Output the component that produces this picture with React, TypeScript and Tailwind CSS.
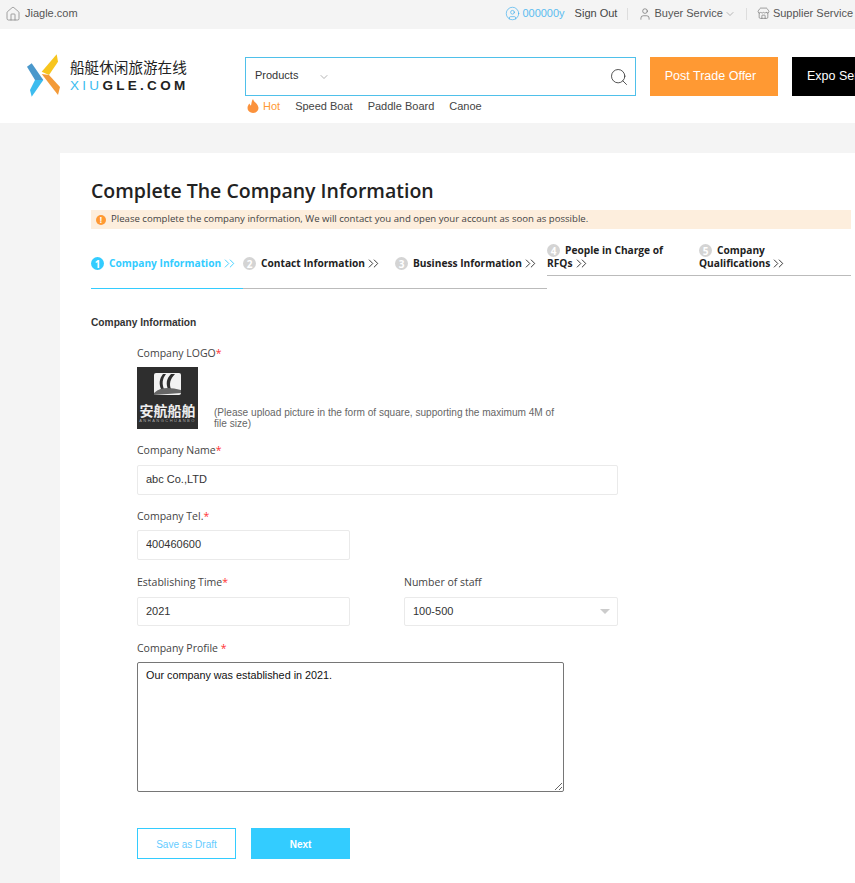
import React from 'react';
import { ChevronDown, ChevronsRight, CircleUser, House, Search, Store, User } from 'lucide-react';

const arial = 'font-["Liberation_Sans",Arial,sans-serif]';
const segoe = 'font-["Open_Sans","Noto_Sans",sans-serif]';

const steps = [
  { n: 1, title: 'Company Information', active: true },
  { n: 2, title: 'Contact Information' },
  { n: 3, title: 'Business Information' },
];

const Label = ({ text, space }: { text: string; space?: boolean }) => (
  <div className={`${segoe} text-[10.5px] leading-[15px] text-[#444]`}>
    {text}
    {space ? ' ' : ''}
    <span className="text-[#f33]">*</span>
  </div>
);

const Num = ({ n, active }: { n: number; active?: boolean }) => (
  <span
    className={`mr-[5px] flex h-[13px] w-[13px] shrink-0 items-center justify-center rounded-full text-[10px] leading-none font-bold text-white ${
      active ? 'bg-[#33ccff]' : 'bg-[#d4d4d4]'
    }`}
  >
    {n}
  </span>
);

const TextField = ({ value, className = '' }: { value: string; className?: string }) => (
  <input
    readOnly
    defaultValue={value}
    className={`${arial} block rounded-[2px] border border-[#eaeaea] bg-white px-2 pb-[2px] text-[11px] text-[#333] outline-none ${className}`}
  />
);

export default function App() {
  return (
    <div className={`${arial} h-[883px] w-[855px] overflow-hidden bg-[#f4f4f4]`}>
      {/* top bar */}
      <div className="flex h-[29px] items-center justify-between pr-[2px] pb-[2px] pl-[5px] text-[11px] text-[#555]">
        <div className="flex items-center gap-[4px]">
          <House size={16} strokeWidth={1} className="text-[#777]" />
          <span>Jiagle.com</span>
        </div>
        <div className="flex items-center">
          <CircleUser size={15} strokeWidth={1} className="text-[#33aaee]" />
          <span className="ml-[2px] text-[#5bbcf0]">000000y</span>
          <span className="ml-[10px] text-[#444]">Sign Out</span>
          <span className="mx-[10px] h-[12px] w-px bg-[#ddd]" />
          <User size={14} strokeWidth={1} className="text-[#555]" />
          <span className="ml-[2px]">Buyer Service</span>
          <ChevronDown size={12} strokeWidth={1} className="ml-[1px] text-[#777]" />
          <span className="mx-[10px] h-[12px] w-px bg-[#ddd]" />
          <Store size={13} strokeWidth={1} className="text-[#555]" />
          <span className="ml-[3px]">Supplier Service</span>
        </div>
      </div>

      {/* header */}
      <div className="flex h-[94px] bg-white pt-[28px] pl-[27px]">
        <div className="-mt-[3px] flex w-[218px] shrink-0 items-start">
          <svg width="36" height="44" viewBox="0 0 36 44" className="shrink-0">
            <path d="M0 12.7 L4.7 9.3 L16.3 26 L8 26 Z" fill="#4a98cc" />
            <path d="M16.3 26 L8 26 L3 36 L4.7 42.7 Z" fill="#3cbcef" />
            <path d="M29.7 .3 L31 7.7 L22 21 L14.7 17.7 Z" fill="#f7c51e" />
            <path d="M14.7 20 L22 21 L33 33 L31 41 Z" fill="#f39a38" />
          </svg>
          <div className="ml-[7px] flex flex-col pt-[4px]">
            <span className='font-["Noto_Sans_CJK_SC",sans-serif] text-[14.6px] leading-[18px] whitespace-nowrap text-[#222]'>
              船艇休闲旅游在线
            </span>
            <span className="mt-[2px] text-[13.5px] leading-[16px] font-semibold tracking-[3.3px] whitespace-nowrap text-[#222]">
              <span className="font-normal text-[#3cbcef]">XIU</span>GLE.COM
            </span>
          </div>
        </div>
        <div className="w-[391px] shrink-0">
          <div className="flex h-[39px] items-center justify-between border border-[#4fc0ea] pr-[6px] pl-[9px]">
            <div className="flex items-center text-[11px] text-[#333]">
              <span className="pb-[2px]">Products</span>
              <ChevronDown size={12} strokeWidth={1.5} className="ml-[20px] text-[#999]" />
            </div>
            <Search size={20} strokeWidth={1} className="text-[#333]" />
          </div>
          <div className="mt-[3px] flex items-center text-[11px] leading-[14px] text-[#444]">
            <svg width="12" height="14" viewBox="0 0 12 14" className="ml-[2px]">
              <path d="M6 0 C6.5 3 11.5 5 11.5 9 A5.5 5 0 0 1 .5 9 C.5 7 1.5 5.5 2.5 4.5 C3 6 3.5 6.5 4 6.5 C4.5 4.5 4.5 2 6 0 Z" fill="#fb923c" />
            </svg>
            <span className="ml-[4px] text-[#ff9933]">Hot</span>
            <span className="ml-[15px]">Speed Boat</span>
            <span className="ml-[15px]">Paddle Board</span>
            <span className="ml-[15px]">Canoe</span>
          </div>
        </div>
        <div className="ml-[14px] flex h-[39px] w-[128px] shrink-0 items-center justify-center bg-[#ff9933] pr-[7px] text-[12.5px] text-white">
          Post Trade Offer
        </div>
        <div className="ml-[14px] flex h-[39px] w-[120px] shrink-0 items-center bg-black pl-[15px] text-[12.5px] whitespace-nowrap text-white">
          Expo Service
        </div>
      </div>

      {/* card */}
      <div className="mt-[30px] ml-[60px] h-[730px] bg-white pt-[24px] pl-[31px]">
        <h1 className={`${segoe} text-[19.5px] leading-[27px] font-semibold text-[#222]`}>
          Complete The Company Information
        </h1>
        <div className={`${segoe} mt-[6px] flex h-[19px] w-[760px] items-center bg-[#fdeedd] pl-[5px] text-[9.6px] text-[#444]`}>
          <span className="mr-[5px] flex h-[10px] w-[10px] items-center justify-center rounded-full bg-[#ff9933] text-[8px] leading-none font-bold text-white">
            !
          </span>
          Please complete the company information, We will contact you and open your account as soon as possible.
        </div>

        {/* steps */}
        <div className={`${segoe} mt-[15px] flex items-start text-[10.2px] leading-[13px] font-bold text-[#222]`}>
          {steps.map((s) => (
            <div
              key={s.n}
              className={`mt-[13px] w-[152px] whitespace-nowrap border-b pb-[18px] ${
                s.active ? 'border-[#33ccff] text-[#33ccff]' : 'border-[#bbb]'
              }`}
            >
              <div className="flex h-[13px] items-center">
                <Num n={s.n} active={s.active} />
                {s.title}
                <ChevronsRight size={17} strokeWidth={1.25} className="shrink-0" />
              </div>
            </div>
          ))}
          <div className="w-[152px] border-b border-[#bbb] pb-[5px]">
            <div className="flex h-[13px] items-center">
              <Num n={4} />
              People in Charge of
            </div>
            <div className="flex h-[13px] items-center">
              RFQs
              <ChevronsRight size={17} strokeWidth={1.25} className="shrink-0" />
            </div>
          </div>
          <div className="w-[152px] border-b border-[#bbb] pb-[5px]">
            <div className="flex h-[13px] items-center">
              <Num n={5} />
              Company
            </div>
            <div className="flex h-[13px] items-center">
              Qualifications
              <ChevronsRight size={17} strokeWidth={1.25} className="shrink-0" />
            </div>
          </div>
        </div>

        <div className="mt-[27px] text-[10.2px] leading-[13px] font-bold text-[#333]">Company Information</div>

        {/* form */}
        <div className="mt-[17px] ml-[46px]">
          <Label text="Company LOGO" />
          <div className="mt-[6px] flex items-end">
            <div className="flex h-[62px] w-[61px] shrink-0 flex-col items-center bg-[#2e2e2e] pt-[6px]">
              <svg width="27" height="22" viewBox="0 0 27 22" className="block shrink-0">
                <rect x="0" y="0" width="27" height="22" rx="2" fill="#f2f2f2" />
                <path d="M9 1 C5 6 5 11 7 16 L10 16 C8 11 8 6 12 1 Z M17 1 C12 6 12 11 14 16 L17 16 C15 11 16 6 21 1 Z" fill="#2e2e2e" />
                <path d="M0 20 C8 13 17 15 27 17 L27 20 L0 22 Z" fill="#666" />
              </svg>
              <span className='font-["Noto_Sans_CJK_SC",sans-serif] mt-[9px] text-[14px] leading-[13px] font-bold whitespace-nowrap text-[#eee]'>
                安航船舶
              </span>
              <span className="mt-[2px] text-[4px] leading-[4px] tracking-[1.5px] whitespace-nowrap text-[#aaa]">ANHANGCHUANBO</span>
            </div>
            <p className="ml-[16px] w-[345px] text-[10.1px] leading-[11px] text-[#666]">
              (Please upload picture in the form of square, supporting the maximum 4M of file size)
            </p>
          </div>

          <div className="mt-[14px]">
            <Label text="Company Name" />
          </div>
          <TextField value="abc Co.,LTD" className="mt-[7px] h-[30px] w-[481px]" />

          <div className="mt-[14px]">
            <Label text="Company Tel." />
          </div>
          <TextField value="400460600" className="mt-[6px] h-[30px] w-[213px]" />

          <div className="mt-[15px] flex gap-[54px]">
            <div className="w-[213px]">
              <Label text="Establishing Time" />
              <TextField value="2021" className="mt-[7px] h-[29px] w-[213px]" />
            </div>
            <div className="w-[214px]">
              <div className={`${segoe} text-[10.5px] leading-[15px] text-[#444]`}>Number of staff</div>
              <div className="relative mt-[7px]">
                <TextField value="100-500" className="h-[29px] w-[214px]" />
                <span className="absolute top-[12px] right-[8px] h-0 w-0 border-x-[5px] border-t-[5px] border-x-transparent border-t-[#ccc]" />
              </div>
            </div>
          </div>

          <div className="mt-[15px]">
            <Label text="Company Profile" space />
          </div>
          <textarea
            readOnly
            defaultValue="Our company was established in 2021."
            className={`${arial} mt-[6px] block h-[130px] w-[427px] resize rounded-[2px] border border-[#767676] px-2 py-[5px] text-[10.8px] leading-[14px] text-[#111] outline-none`}
          />

          <div className="mt-[36px] flex gap-[15px] text-[10px]">
            <button className="h-[31px] w-[99px] border border-[#33ccff] bg-white pt-[1px] text-[#66ccff]">Save as Draft</button>
            <button className="h-[31px] w-[99px] bg-[#33ccff] pt-[1px] font-bold text-white">Next</button>
          </div>
        </div>
      </div>
    </div>
  );
}
